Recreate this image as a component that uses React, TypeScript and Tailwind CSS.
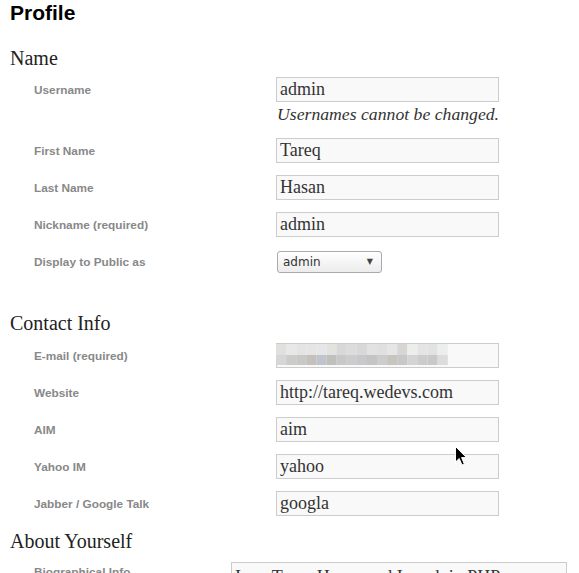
import React from 'react'

const sans = "font-['Liberation_Sans',Arial,sans-serif]"
const serif = "font-['Liberation_Serif','Times_New_Roman',serif]"

const blurTop = [
  '#e0e0df', '#e8e8e6', '#e4e4e4', '#e5e5e5', '#e6e6e8', '#e4e2df', '#d8d8d8', '#dcdcdc', '#d8d8d8',
  '#e2e2e2', '#e0e0e0', '#e6e6e6', '#d8d6d4', '#eceeec', '#e4e4e4', '#e2e2e2', '#eceeee',
]
const blurBottom = [
  '#d6d6d6', '#cccccc', '#c8c8c6', '#c4c0bc', '#c0c4cc', '#c0c0bc', '#c8c8c8', '#cccccc', '#c8c8cc',
  '#c4c4c4', '#cccccc', '#c8c4c0', '#c8c8c8', '#d4d4d4', '#cccccc', '#c8cac8', '#dcdcdc',
]

const Label = ({ children, className = '' }: { children: React.ReactNode; className?: string }) => (
  <div className={`${sans} text-[11.8px] font-bold text-[#888] leading-[16px] pl-[24px] ${className}`}>
    {children}
  </div>
)

const TextField = ({ value }: { value: string }) => (
  <input
    readOnly
    value={value}
    className={`${serif} w-[223px] h-[25px] border border-[#cccccc] bg-[#f9f9f9] px-[3px] text-[18px] text-[#333] outline-none`}
  />
)

const Row = ({ label, children, className = '' }: { label: string; children: React.ReactNode; className?: string }) => (
  <div className={`flex items-center ${className}`}>
    <Label className="w-[266px] shrink-0">{label}</Label>
    {children}
  </div>
)

const Heading = ({ children, className = '' }: { children: React.ReactNode; className?: string }) => (
  <h3 className={`${serif} text-[20px] leading-[24px] text-[#222] ${className}`}>{children}</h3>
)

const EmailField = () => (
  <div className="relative w-[223px] h-[25px] border border-[#cccccc] bg-[#f9f9f9]">
    <svg className="absolute left-[-1px] top-[0px]" width="172" height="22">
      {blurTop.map((c, i) => (
        <rect key={'t' + i} x={i * 10.1} y={0} width={10.2} height={11} fill={c} />
      ))}
      {blurBottom.map((c, i) => (
        <rect key={'b' + i} x={i * 10.1} y={11} width={10.2} height={10} fill={c} />
      ))}
    </svg>
  </div>
)

const SelectBox = () => (
  <div className="ml-[1px] flex h-[22px] w-[105px] items-center justify-between rounded-[3px] border border-[#aaaaaa] bg-gradient-to-b from-white to-[#ececec] pl-[5px] pr-[8px]">
    <span className="font-['DejaVu_Sans',sans-serif] text-[12px] text-[#333]">admin</span>
    <span className="font-['DejaVu_Sans',sans-serif] text-[8px] text-[#444]">▼</span>
  </div>
)

const Cursor = () => (
  <svg className="absolute left-[455px] top-[446px]" width="14" height="21" viewBox="0 0 14 21">
    <path d="M0.5 0.5 L0.5 16 L4.2 12.5 L7 19 L9.3 18 L6.6 11.6 L11.5 11.6 Z" fill="#000" stroke="#fff" strokeWidth="1" />
  </svg>
)

export default function App() {
  return (
    <div className="relative h-[573px] w-[579px] overflow-hidden bg-white pl-[10px]">
      <h2 className={`${sans} text-[21px] font-bold leading-[26px] text-black`}>Profile</h2>

      <Heading className="mt-[20px]">Name</Heading>
      <Row label="Username" className="mt-[7px]">
        <TextField value="admin" />
      </Row>
      <div className={`${serif} ml-[267px] mt-[2px] text-[17.7px] italic leading-[20px] text-[#333]`}>
        Usernames cannot be changed.
      </div>
      <Row label="First Name" className="mt-[14px]">
        <TextField value="Tareq" />
      </Row>
      <Row label="Last Name" className="mt-[12px]">
        <TextField value="Hasan" />
      </Row>
      <Row label="Nickname (required)" className="mt-[12px]">
        <TextField value="admin" />
      </Row>
      <Row label="Display to Public as" className="mt-[14px]">
        <SelectBox />
      </Row>

      <Heading className="mt-[38px]">Contact Info</Heading>
      <Row label="E-mail (required)" className="mt-[8px]">
        <EmailField />
      </Row>
      <Row label="Website" className="mt-[12px]">
        <TextField value="http://tareq.wedevs.com" />
      </Row>
      <Row label="AIM" className="mt-[12px]">
        <TextField value="aim" />
      </Row>
      <Row label="Yahoo IM" className="mt-[12px]">
        <TextField value="yahoo" />
      </Row>
      <Row label="Jabber / Google Talk" className="mt-[12px]">
        <TextField value="googla" />
      </Row>

      <Heading className="mt-[13px]">About Yourself</Heading>
      <div className="mt-[9px] flex items-start">
        <Label className="w-[221px] shrink-0 pt-[2px]">Biographical Info</Label>
        <div className={`${serif} h-[110px] w-[336px] border border-[#cccccc] bg-[#f9f9f9] px-[3px] pt-[3px] text-[18px] leading-[22px] text-[#333]`}>
          I am Tareq Hasan and I work in PHP, WordPress
        </div>
      </div>

      <Cursor />
    </div>
  )
}
